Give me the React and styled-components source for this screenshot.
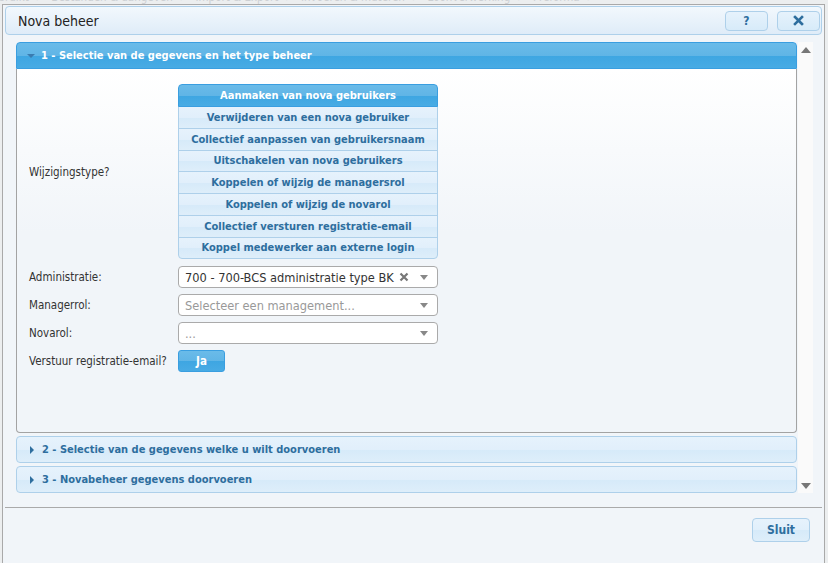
import styled, { createGlobalStyle } from "styled-components"

const GlobalStyle = createGlobalStyle`
    html, body {
        margin: 0;
        padding: 0;
        background: #e9ecef;
        font-family: "DejaVu Sans Condensed", "DejaVu Sans", sans-serif;
    }
`

const crumbs = ["Gebruikt", "Bestanden & dangeven", "Import & Export", "Invoeren & muteren", "Loonverwerking", "Preforma"]

const choices = [
    "Aanmaken van nova gebruikers",
    "Verwijderen van een nova gebruiker",
    "Collectief aanpassen van gebruikersnaam",
    "Uitschakelen van nova gebruikers",
    "Koppelen of wijzig de managersrol",
    "Koppelen of wijzig de novarol",
    "Collectief versturen registratie-email",
    "Koppel medewerker aan externe login",
]

export default function App() {
    return (
        <Page>
            <GlobalStyle />
            <Crumbs>
                {crumbs.map((c) => (
                    <span key={c}>
                        {c}
                        <Sep>&gt;</Sep>
                    </span>
                ))}
            </Crumbs>
            <Dialog>
                <TitleBar>
                    <Title>Nova beheer</Title>
                    <TitleButtons>
                        <IconButton>?</IconButton>
                        <IconButton>
                            <svg width="11" height="11" viewBox="0 0 11 11">
                                <path d="M2 2 L9 9 M9 2 L2 9" stroke="#2e6e9e" strokeWidth="2.6" strokeLinecap="square" />
                            </svg>
                        </IconButton>
                    </TitleButtons>
                </TitleBar>
                <Body>
                    <Scroller>
                        <Panels>
                            <SectionHead open>
                                <Arrow open />
                                1 - Selectie van de gegevens en het type beheer
                            </SectionHead>
                            <SectionBody>
                                <FormRow>
                                    <Label>Wijzigingstype?</Label>
                                    <ButtonSet>
                                        {choices.map((c, i) => (
                                            <Choice key={c} active={i === 0}>
                                                {c}
                                            </Choice>
                                        ))}
                                    </ButtonSet>
                                </FormRow>
                                <FormRow>
                                    <Label>Administratie:</Label>
                                    <Select>
                                        <SelectText>700 - 700-BCS administratie type BK</SelectText>
                                        <Clear>
                                            <svg width="10" height="10" viewBox="0 0 10 10">
                                                <path d="M1.5 1.5 L8.5 8.5 M8.5 1.5 L1.5 8.5" stroke="#777" strokeWidth="2.2" />
                                            </svg>
                                        </Clear>
                                        <Caret />
                                    </Select>
                                </FormRow>
                                <FormRow>
                                    <Label>Managerrol:</Label>
                                    <Select>
                                        <SelectText placeholder>Selecteer een management...</SelectText>
                                        <Caret />
                                    </Select>
                                </FormRow>
                                <FormRow>
                                    <Label>Novarol:</Label>
                                    <Select>
                                        <SelectText placeholder>...</SelectText>
                                        <Caret />
                                    </Select>
                                </FormRow>
                                <FormRow>
                                    <Label>Verstuur registratie-email?</Label>
                                    <Toggle>Ja</Toggle>
                                </FormRow>
                            </SectionBody>
                            <SectionHead>
                                <Arrow />
                                2 - Selectie van de gegevens welke u wilt doorvoeren
                            </SectionHead>
                            <SectionHead>
                                <Arrow />
                                3 - Novabeheer gegevens doorvoeren
                            </SectionHead>
                        </Panels>
                        <ScrollTrack>
                            <ScrollArrow />
                            <ScrollArrow down />
                        </ScrollTrack>
                    </Scroller>
                </Body>
                <Footer>
                    <CloseButton>Sluit</CloseButton>
                </Footer>
            </Dialog>
        </Page>
    )
}

const Page = styled.div`
    position: relative;
    width: 828px;
    height: 563px;
    overflow: hidden;
    background: #eceeef;
`

const Crumbs = styled.div`
    margin-top: -10px;
    margin-left: -16px;
    font-size: 11.5px;
    color: #cdd0d3;
    white-space: nowrap;
`

const Sep = styled.span`
    margin: 0 7px;
`

const Dialog = styled.div`
    position: absolute;
    left: 2px;
    top: 4px;
    width: 823px;
    height: 600px;
    border: 1px solid #a9a9a9;
    background: #f1f5f9;
    padding: 1px 2px;
    box-sizing: border-box;
    display: flex;
    flex-direction: column;
`

const TitleBar = styled.div`
    height: 29px;
    box-sizing: border-box;
    border: 1px solid #aed0ea;
    border-radius: 4px;
    background: linear-gradient(#f2f8fd, #dfecf8);
    display: flex;
    align-items: center;
    justify-content: space-between;
    padding: 0 1px 0 12px;
`

const Title = styled.div`
    font-size: 14px;
    color: #222;
`

const TitleButtons = styled.div`
    display: flex;
    gap: 9px;
`

const IconButton = styled.div`
    width: 43px;
    height: 20px;
    box-sizing: border-box;
    border: 1px solid #aed0ea;
    border-radius: 4px;
    background: linear-gradient(#e6f2fc, #d7ebf9);
    display: flex;
    align-items: center;
    justify-content: center;
    color: #2e6e9e;
    font-weight: bold;
    font-size: 12px;
`

const Body = styled.div`
    padding: 7px 9px 0 11px;
    border-bottom: 1px solid #aaa;
    height: 473px;
    box-sizing: border-box;
`

const Scroller = styled.div`
    display: flex;
    height: 451px;
`

const Panels = styled.div`
    flex: 1;
    display: flex;
    flex-direction: column;
    gap: 3px;
`

const SectionHead = styled.div`
    height: 27px;
    box-sizing: border-box;
    display: flex;
    align-items: center;
    padding-left: 10px;
    font-size: 11px;
    font-weight: bold;
    border: 1px solid ${(p) => (p.open ? "#3a9ee0" : "#aed0ea")};
    border-radius: ${(p) => (p.open ? "4px 4px 0 0" : "4px")};
    color: ${(p) => (p.open ? "#fff" : "#2e6e9e")};
    background: ${(p) =>
        p.open
            ? "linear-gradient(#6abbe9 0%, #60b5e6 50%, #3ea6e2 51%, #48abe4 100%)"
            : "linear-gradient(#e6f2fc 0%, #e1effb 50%, #d6eaf9 51%, #deeefa 100%)"};
`

const Arrow = styled.span`
    width: 0;
    height: 0;
    margin-right: ${(p) => (p.open ? "6px" : "8px")};
    margin-left: ${(p) => (p.open ? "0" : "3px")};
    ${(p) =>
        p.open
            ? `border-left: 4px solid transparent;
               border-right: 4px solid transparent;
               border-top: 4px solid #3a7cb0;`
            : `border-top: 4px solid transparent;
               border-bottom: 4px solid transparent;
               border-left: 4px solid #2e6e9e;`}
`

const SectionBody = styled.div`
    height: 364px;
    margin-top: -3px;
    box-sizing: border-box;
    border: 1px solid #a3a3a3;
    border-top: none;
    border-radius: 0 0 4px 4px;
    background: linear-gradient(#ffffff 0%, #f1f5f9 45%, #f1f5f9 100%);
    padding: 15px 12px;
    display: flex;
    flex-direction: column;
    gap: 6px;
`

const FormRow = styled.div`
    display: flex;
    align-items: center;
`

const Label = styled.div`
    width: 149px;
    font-size: 11.5px;
    color: #333;
`

const ButtonSet = styled.div`
    width: 260px;
    display: flex;
    flex-direction: column;
    margin-bottom: 1px;
`

const Choice = styled.div`
    height: ${(p) => (p.active ? "23px" : "22.75px")};
    box-sizing: border-box;
    display: flex;
    align-items: center;
    justify-content: center;
    font-size: 11px;
    font-weight: bold;
    margin-top: -1px;
    border: 1px solid ${(p) => (p.active ? "#3a9ee0" : "#aed0ea")};
    color: ${(p) => (p.active ? "#fff" : "#2e6e9e")};
    background: ${(p) =>
        p.active
            ? "linear-gradient(#6abbe9 0%, #60b5e6 50%, #3ea6e2 51%, #48abe4 100%)"
            : "linear-gradient(#e6f2fc 0%, #e1effb 50%, #d6eaf9 51%, #deeefa 100%)"};
    position: relative;
    z-index: ${(p) => (p.active ? 1 : 0)};
    &:first-child {
        margin-top: 0;
        border-radius: 4px 4px 0 0;
    }
    &:last-child {
        border-radius: 0 0 4px 4px;
    }
`

const Select = styled.div`
    width: 260px;
    height: 22px;
    box-sizing: border-box;
    border: 1px solid #aaa;
    border-radius: 4px;
    background: #fff;
    display: flex;
    align-items: center;
    padding: 0 9px 0 6px;
`

const SelectText = styled.div`
    flex: 1;
    font-size: 12.7px;
    color: ${(p) => (p.placeholder ? "#999" : "#333")};
    white-space: nowrap;
`

const Clear = styled.span`
    display: flex;
    margin-right: 11px;
`

const Caret = styled.span`
    width: 0;
    height: 0;
    border-left: 4px solid transparent;
    border-right: 4px solid transparent;
    border-top: 5px solid #888;
`

const Toggle = styled.div`
    width: 47px;
    height: 22px;
    box-sizing: border-box;
    border: 1px solid #3a9ee0;
    border-radius: 3px;
    background: linear-gradient(#6abbe9 0%, #60b5e6 50%, #3ea6e2 51%, #48abe4 100%);
    color: #fff;
    font-size: 11.5px;
    font-weight: bold;
    display: flex;
    align-items: center;
    justify-content: center;
`

const ScrollTrack = styled.div`
    width: 15px;
    margin-left: 1px;
    background: #fafafa;
    display: flex;
    flex-direction: column;
    justify-content: space-between;
    align-items: center;
    padding: 5px 0 4px;
    box-sizing: border-box;
`

const ScrollArrow = styled.span`
    width: 0;
    height: 0;
    border-left: 5px solid transparent;
    border-right: 5px solid transparent;
    ${(p) => (p.down ? "border-top: 6px solid #777;" : "border-bottom: 6px solid #777;")}
`

const Footer = styled.div`
    display: flex;
    justify-content: flex-end;
    padding: 10px 12px 0 0;
`

const CloseButton = styled.div`
    width: 58px;
    height: 24px;
    box-sizing: border-box;
    border: 1px solid #aed0ea;
    border-radius: 4px;
    background: linear-gradient(#e6f2fc 0%, #e1effb 50%, #d6eaf9 51%, #deeefa 100%);
    color: #2e6e9e;
    font-size: 12px;
    font-weight: bold;
    display: flex;
    align-items: center;
    justify-content: center;
`
